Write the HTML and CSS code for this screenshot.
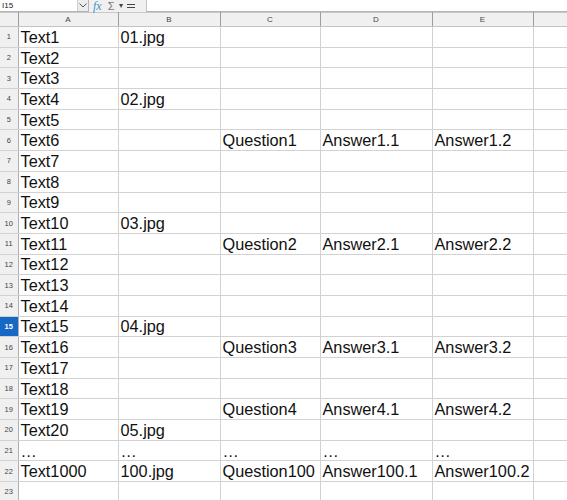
FILE: index.html
```html
<!DOCTYPE html>
<html lang="en">
<head>
	<meta charset="UTF-8">
	<title>Sheet</title>
	<link rel="stylesheet" href="styles.css">
</head>
<body>
	<div class="toolbar">
		<div class="namebox">
			<span class="ref">I15</span>
			<span class="drop">
				<svg width="8" height="5" viewBox="0 0 8 5"><path d="M0.5 0.5 L4 4 L7.5 0.5" fill="none" stroke="#555" stroke-width="1"/></svg>
			</span>
		</div>
		<div class="tools">
			<span class="fx">fx</span>
			<span class="sum">&Sigma;</span>
			<span class="caret">&#9662;</span>
			<span class="eq">
				<svg width="8" height="8" viewBox="0 0 8 8"><path d="M0 2.5 H8 M0 5.5 H8" stroke="#444" stroke-width="1.2"/></svg>
			</span>
		</div>
		<div class="formula"></div>
	</div>

	<table class="sheet">
		<colgroup>
			<col class="c-row">
			<col class="c-a">
			<col class="c-b">
			<col class="c-c">
			<col class="c-d">
			<col class="c-e">
			<col class="c-f">
		</colgroup>
		<thead>
			<tr>
				<th class="corner"></th>
				<th>A</th>
				<th>B</th>
				<th>C</th>
				<th>D</th>
				<th>E</th>
				<th></th>
			</tr>
		</thead>
		<tbody>
			<tr><th>1</th><td>Text1</td><td>01.jpg</td><td></td><td></td><td></td><td></td></tr>
			<tr><th>2</th><td>Text2</td><td></td><td></td><td></td><td></td><td></td></tr>
			<tr><th>3</th><td>Text3</td><td></td><td></td><td></td><td></td><td></td></tr>
			<tr><th>4</th><td>Text4</td><td>02.jpg</td><td></td><td></td><td></td><td></td></tr>
			<tr><th>5</th><td>Text5</td><td></td><td></td><td></td><td></td><td></td></tr>
			<tr><th>6</th><td>Text6</td><td></td><td>Question1</td><td>Answer1.1</td><td>Answer1.2</td><td></td></tr>
			<tr><th>7</th><td>Text7</td><td></td><td></td><td></td><td></td><td></td></tr>
			<tr><th>8</th><td>Text8</td><td></td><td></td><td></td><td></td><td></td></tr>
			<tr><th>9</th><td>Text9</td><td></td><td></td><td></td><td></td><td></td></tr>
			<tr><th>10</th><td>Text10</td><td>03.jpg</td><td></td><td></td><td></td><td></td></tr>
			<tr><th>11</th><td>Text11</td><td></td><td>Question2</td><td>Answer2.1</td><td>Answer2.2</td><td></td></tr>
			<tr><th>12</th><td>Text12</td><td></td><td></td><td></td><td></td><td></td></tr>
			<tr><th>13</th><td>Text13</td><td></td><td></td><td></td><td></td><td></td></tr>
			<tr><th>14</th><td>Text14</td><td></td><td></td><td></td><td></td><td></td></tr>
			<tr><th class="current">15</th><td>Text15</td><td>04.jpg</td><td></td><td></td><td></td><td></td></tr>
			<tr><th>16</th><td>Text16</td><td></td><td>Question3</td><td>Answer3.1</td><td>Answer3.2</td><td></td></tr>
			<tr><th>17</th><td>Text17</td><td></td><td></td><td></td><td></td><td></td></tr>
			<tr><th>18</th><td>Text18</td><td></td><td></td><td></td><td></td><td></td></tr>
			<tr><th>19</th><td>Text19</td><td></td><td>Question4</td><td>Answer4.1</td><td>Answer4.2</td><td></td></tr>
			<tr><th>20</th><td>Text20</td><td>05.jpg</td><td></td><td></td><td></td><td></td></tr>
			<tr><th>21</th><td>…</td><td>…</td><td>…</td><td>…</td><td>…</td><td></td></tr>
			<tr><th>22</th><td>Text1000</td><td>100.jpg</td><td>Question100</td><td>Answer100.1</td><td>Answer100.2</td><td></td></tr>
			<tr><th>23</th><td></td><td></td><td></td><td></td><td></td><td></td></tr>
		</tbody>
	</table>
</body>
</html>
```

FILE: styles.css
```css
* {
	margin: 0;
	padding: 0;
	box-sizing: border-box;
}
html, body {
	width: 567px;
	height: 500px;
	overflow: hidden;
	background-color: #fff;
}
body {
	font-family: "Liberation Sans", Arial, sans-serif;
}

/* toolbar */
.toolbar {
	display: flex;
	height: 12px;
	background-color: #f0f0f0;
}
.namebox {
	display: flex;
	width: 89px;
	height: 12px;
	background-color: #fff;
	border: 1px solid #b4b4b4;
	border-top: none;
	border-left: none;
}
.namebox .ref {
	flex: 1;
	font-size: 8px;
	line-height: 11px;
	padding-left: 2px;
	color: #222;
}
.namebox .drop {
	width: 11px;
	display: flex;
	align-items: center;
	justify-content: center;
	background-color: #ececec;
	border-left: 1px solid #cfcfcf;
}
.tools {
	display: flex;
	align-items: center;
	width: 57px;
	height: 12px;
	padding-left: 4px;
	color: #555;
}
.tools .fx {
	font-family: "Liberation Serif", serif;
	font-style: italic;
	font-size: 12px;
	line-height: 12px;
	color: #3b96c4;
	margin-right: 6px;
}
.tools .sum {
	font-size: 11px;
	line-height: 12px;
	color: #777;
	margin-right: 5px;
}
.tools .caret {
	font-size: 8px;
	line-height: 12px;
	color: #444;
	margin-right: 4px;
}
.tools .eq {
	display: flex;
	align-items: center;
}
.formula {
	flex: 1;
	height: 12px;
	background-color: #fff;
	border-left: 1px solid #c2c2c2;
	border-bottom: 1px solid #b4b4b4;
}

/* grid */
.sheet {
	table-layout: fixed;
	border-collapse: collapse;
	width: 567px;
}
.c-row { width: 18px; }
.c-a { width: 100px; }
.c-b { width: 102px; }
.c-c { width: 100px; }
.c-d { width: 112px; }
.c-e { width: 101px; }
.c-f { width: 34px; }

.sheet thead th {
	height: 14px;
	font-size: 8px;
	font-weight: normal;
	color: #444;
	background-color: #f0f0f0;
	border-top: 1px solid #c8c8c8;
	border-bottom: 1px solid #c4c4c4;
	border-right: 1px solid #9c9c9c;
	text-align: center;
	line-height: 12px;
	vertical-align: middle;
}
.sheet tbody tr {
	height: 20.7px;
}
.sheet tbody th {
	font-size: 7.5px;
	font-weight: normal;
	color: #444;
	background-color: #f0f0f0;
	border-right: 1px solid #b0b0b0;
	border-bottom: 1px solid #d2d2d2;
	text-align: center;
	vertical-align: middle;
}
.sheet tbody th.current {
	background-color: #1767c4;
	color: #fff;
	font-weight: bold;
}
.sheet td {
	font-size: 16.3px;
	color: #111;
	padding: 0 2px;
	white-space: nowrap;
	overflow: hidden;
	border-right: 1px solid #d2d2d2;
	border-bottom: 1px solid #d2d2d2;
	vertical-align: middle;
	line-height: 18px;
}
```
